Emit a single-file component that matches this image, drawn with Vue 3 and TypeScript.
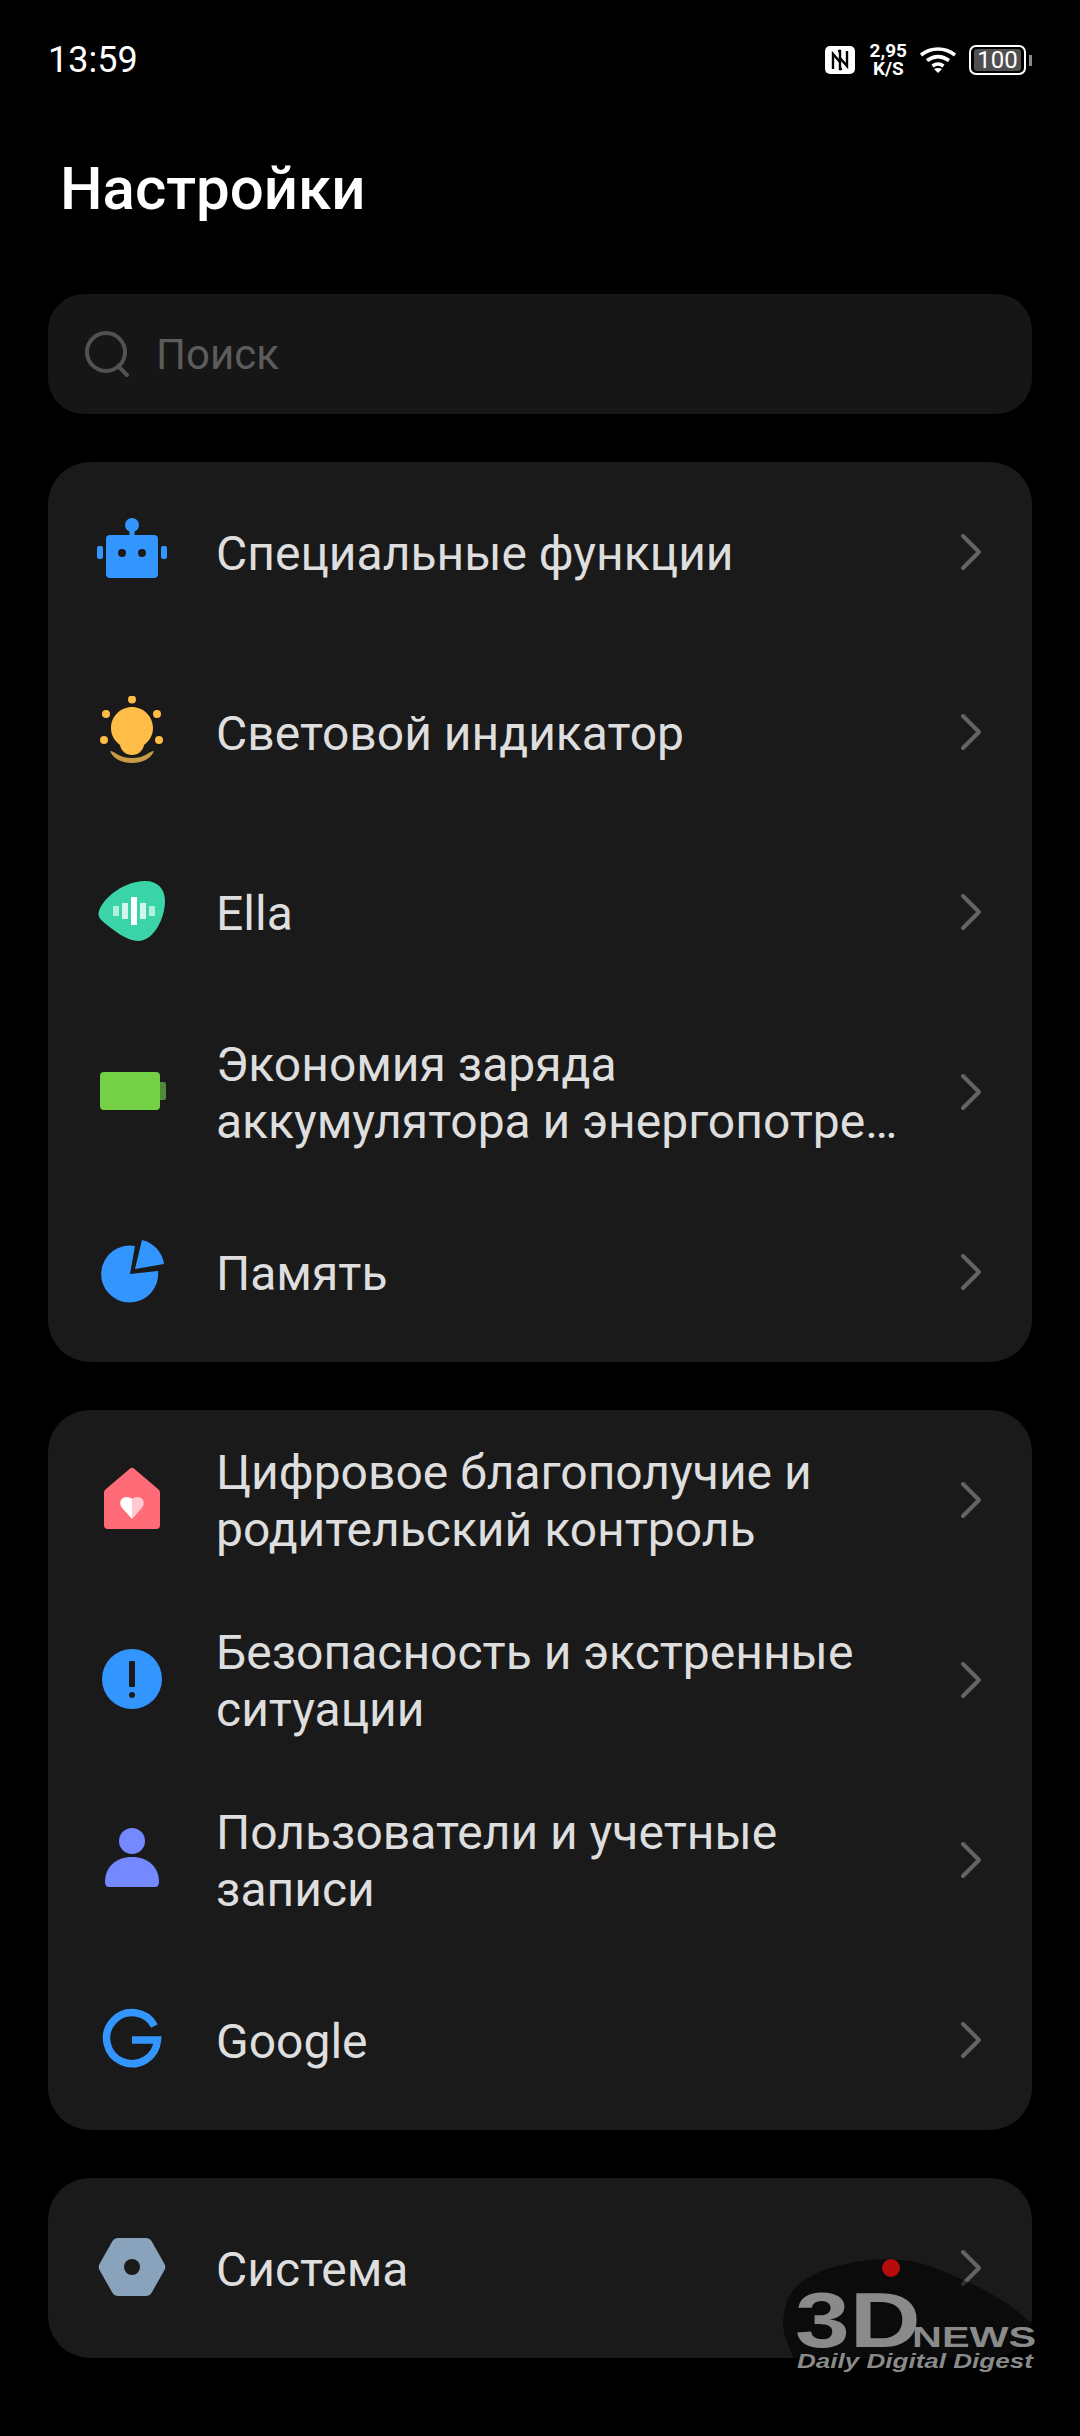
<script setup lang="ts">
interface Row { id: string; lines: string[] }
const groupOne: Row[] = [
  { id: 'robot', lines: ['Специальные функции'] },
  { id: 'bulb', lines: ['Световой индикатор'] },
  { id: 'ella', lines: ['Ella'] },
  { id: 'battery', lines: ['Экономия заряда', 'аккумулятора и энергопотре…'] },
  { id: 'pie', lines: ['Память'] },
]
const groupTwo: Row[] = [
  { id: 'home', lines: ['Цифровое благополучие и', 'родительский контроль'] },
  { id: 'alert', lines: ['Безопасность и экстренные', 'ситуации'] },
  { id: 'user', lines: ['Пользователи и учетные', 'записи'] },
  { id: 'google', lines: ['Google'] },
]
const groupThree: Row[] = [{ id: 'system', lines: ['Система'] }]
const groups = [groupOne, groupTwo, groupThree]
</script>

<template>
  <div class="page">
    <header class="status">
      <span class="time">13:59</span>
      <div class="status-icons">
        <svg class="nfc" width="30" height="28" viewBox="0 0 30 28">
          <rect width="30" height="28" rx="5" fill="#fff" />
          <path d="M8 23V8l7 8V5h-2M22 5v15l-7-8v11h2" fill="none" stroke="#000" stroke-width="2.4" />
        </svg>
        <div class="speed"><span>2,95</span><span>K/S</span></div>
        <svg class="wifi" width="36" height="26" viewBox="0 0 36 26">
          <path d="M1 8C11 0 25 0 35 8M7 13.500c7-5 15-5 22 0M12.500 19c3.500-2.500 7.500-2.500 11 0" fill="none" stroke="#fff" stroke-width="3.600" />
          <path d="M14 22c2.500-1.300 5.500-1.300 8 0l-4 4z" fill="#fff" />
        </svg>
        <div class="battery">
          <div class="battery-body"><span>100</span></div>
          <i class="battery-tip"></i>
        </div>
      </div>
    </header>

    <h1 class="title">Настройки</h1>

    <div class="search">
      <svg width="46" height="50" viewBox="0 0 46 50">
        <circle cx="22" cy="23" r="19" fill="none" stroke="#525252" stroke-width="4" />
        <path d="M34 37l9 9" stroke="#525252" stroke-width="4" stroke-linecap="round" />
      </svg>
      <span>Поиск</span>
    </div>

    <section v-for="(group, g) in groups" :key="g" class="card">
      <div v-for="row in group" :key="row.id" class="row">
        <div class="icon">
          <svg width="72" height="72" viewBox="0 0 72 72">
            <template v-if="row.id === 'robot'">
              <circle cx="36" cy="9" r="7" fill="#3396ff" />
              <rect x="33.500" y="12" width="5" height="10" fill="#3396ff" />
              <rect x="10" y="19" width="52" height="43" rx="4" fill="#3396ff" />
              <rect x="1" y="30" width="6" height="13" rx="2" fill="#3396ff" />
              <rect x="65" y="30" width="6" height="13" rx="2" fill="#3396ff" />
              <circle cx="26" cy="37" r="4" fill="#1a1a1a" />
              <circle cx="46" cy="37" r="4" fill="#1a1a1a" />
            </template>
            <template v-else-if="row.id === 'bulb'">
              <circle cx="36" cy="3.500" r="4" fill="#ffbc47" />
              <circle cx="10" cy="18" r="4" fill="#ffbc47" />
              <circle cx="61" cy="18" r="4" fill="#ffbc47" />
              <circle cx="8" cy="44" r="4" fill="#ffbc47" />
              <circle cx="63" cy="44" r="4" fill="#ffbc47" />
              <path d="M14 55c2 0 4 1 6 2.500 9 6 23 6 32 0 2-1.500 4-2.500 6-2.500-3 8-12 12-22 12s-19-4-22-12z" fill="#c79a45" />
              <path d="M36 11c11.500 0 21 9.500 21 21 0 8-4 13-9 17-1 6-6 10-12 10s-11-4-12-10c-5-4-9-9-9-17 0-11.500 9.500-21 21-21z" fill="#ffbc47" />
            </template>
            <template v-else-if="row.id === 'ella'">
              <path d="M3 35C8 20 30 5 49 5c13 0 20 8 20 20 0 17-11 40-27 40-10 0-22-9-31-16C5 44 1 41 3 35z" fill="#3bd4a8" />
              <rect x="17" y="30" width="6" height="10" fill="#b5f0dd" />
              <rect x="26" y="27" width="6" height="16" fill="#d2f6eb" />
              <rect x="35" y="21" width="6" height="28" fill="#fff" />
              <rect x="44" y="27" width="6" height="16" fill="#d2f6eb" />
              <rect x="53" y="30" width="6" height="10" fill="#b5f0dd" />
            </template>
            <template v-else-if="row.id === 'battery'">
              <rect x="60" y="26" width="10" height="18" rx="2" fill="#4f8a39" />
              <rect x="4" y="16" width="60" height="38" rx="4" fill="#74d146" />
            </template>
            <template v-else-if="row.id === 'pie'">
              <path d="M39 10 34 38 62 35A28.500 28.500 0 1 1 39 10z" fill="#3396ff" />
              <path d="M46 4 39 33 68 28A29 29 0 0 0 46 4z" fill="#3396ff" />
            </template>
            <template v-else-if="row.id === 'home'">
              <path d="M33.500 5a3.500 3.500 0 0 1 5 0L62 25c1.500 1.500 2 2 2 4V61a4 4 0 0 1-4 4H12a4 4 0 0 1-4-4V29c0-2 .5-2.500 2-4z" fill="#ff6b77" />
              <path d="M36 55 27 45c-5-5-3-12 4-12 2 0 4 1 5 2z" fill="#fff" />
              <path d="M36 55 45 45c5-5 3-12-4-12-2 0-4 1-5 2z" fill="#ffc9cf" />
            </template>
            <template v-else-if="row.id === 'alert'">
              <circle cx="36" cy="35" r="30" fill="#3396ff" />
              <rect x="33" y="17" width="6" height="26" rx="1" fill="#1a1a1a" />
              <circle cx="36" cy="51" r="3" fill="#1a1a1a" />
            </template>
            <template v-else-if="row.id === 'user'">
              <circle cx="36" cy="17" r="13" fill="#7488ff" />
              <path d="M9 58c0-15 11-25 27-25s27 10 27 25c0 3-1.500 5-4 5H13c-2.500 0-4-2-4-5z" fill="#7488ff" />
            </template>
            <template v-else-if="row.id === 'google'">
              <path d="M58.500 22A25.500 25.500 0 1 0 61.500 36H36" fill="none" stroke="#3396ff" stroke-width="7.500" />
            </template>
            <template v-else>
              <path d="M22 6h28c2.500 0 4 1 5.500 3l13 23c1 2 1 4 0 6l-13 23c-1.500 2-3 3-5.500 3H22c-2.500 0-4-1-5.500-3l-13-23c-1-2-1-4 0-6l13-23C18 7 19.500 6 22 6z" fill="#8aa3bd" />
              <circle cx="36" cy="35" r="8" fill="#1a1a1a" />
            </template>
          </svg>
        </div>
        <div class="label">
          <span v-for="line in row.lines" :key="line">{{ line }}</span>
        </div>
        <svg class="chevron" width="22" height="38" viewBox="0 0 22 38">
          <path d="M3 3l16 16L3 35" fill="none" stroke="#646464" stroke-width="4" stroke-linecap="round" stroke-linejoin="round" />
        </svg>
      </div>
    </section>

    <div class="watermark">
      <svg class="smear" width="260" height="104" viewBox="0 0 260 104">
        <path d="M4 58C6 36 20 22 50 12 90 0 130 0 160 14c30 12 66 28 92 54v36H14C8 86 0 76 4 58z" fill="#000" fill-opacity="0.55" />
      </svg>
      <i class="dot"></i>
      <b class="mark-3d">3D</b>
      <b class="mark-news">NEWS</b>
      <em class="mark-tag">Daily Digital Digest</em>
    </div>
  </div>
</template>

<style>
html, body { margin: 0; background: #000; }
</style>

<style scoped>
.page {
  position: relative;
  box-sizing: border-box;
  width: 1080px;
  height: 2436px;
  padding: 0 48px;
  overflow: hidden;
  background: #000;
  color: #dedede;
  font-family: Roboto, "Noto Sans", sans-serif;
}
.status {
  display: flex;
  align-items: center;
  justify-content: space-between;
  height: 60px;
  padding-top: 30px;
  color: #fff;
}
.time { font-size: 36px; }
.status-icons { display: flex; align-items: center; gap: 13px; }
.nfc { margin-right: 2px; margin-top: -1px; }
.speed {
  display: flex;
  flex-direction: column;
  align-items: center;
  font-size: 19px;
  font-weight: 700;
  line-height: 18px;
}
.battery { display: flex; align-items: center; gap: 3px; }
.battery-body {
  box-sizing: border-box;
  width: 57px;
  height: 30px;
  padding: 2px 3px;
  border: 2px solid #fff;
  border-radius: 7px;
}
.battery-body span {
  display: block;
  height: 100%;
  border-radius: 3px;
  background: #505050;
  font-size: 24px;
  line-height: 22px;
  text-align: center;
}
.battery-tip { width: 3px; height: 11px; background: #8a8a8a; }
.title {
  margin: 64px 0 0 12px;
  color: #fff;
  font-size: 60px;
  font-weight: 500;
  line-height: 70px;
}
.search {
  display: flex;
  align-items: center;
  gap: 26px;
  height: 120px;
  margin-top: 70px;
  padding-left: 36px;
  border-radius: 36px;
  background: #161616;
  color: #5c5c5c;
  font-size: 42px;
}
.card {
  margin-top: 48px;
  border-radius: 42px;
  background: #1a1a1a;
}
.row {
  display: flex;
  align-items: center;
  height: 180px;
  padding: 0 50px 0 48px;
}
.icon { display: flex; flex: none; width: 72px; height: 72px; }
.label {
  display: flex;
  flex: 1;
  flex-direction: column;
  margin-left: 48px;
  font-size: 48px;
  line-height: 57px;
  white-space: nowrap;
  transform: translateY(1px);
}
.chevron { flex: none; }
.watermark {
  position: absolute;
  left: 780px;
  top: 2256px;
  width: 260px;
  height: 120px;
  color: #8a8a8a;
  font-family: "Liberation Sans", sans-serif;
}
.smear { position: absolute; left: 0; top: 0; }
.dot {
  position: absolute;
  left: 102px;
  top: 3px;
  width: 18px;
  height: 18px;
  border-radius: 50%;
  background: #b50d0d;
}
.mark-3d, .mark-news, .mark-tag {
  position: absolute;
  transform-origin: left top;
  white-space: nowrap;
}
.mark-3d {
  left: 15px;
  top: 25px;
  font-size: 78px;
  line-height: 78px;
  transform: scaleX(1.26);
}
.mark-news {
  left: 132px;
  top: 66px;
  font-size: 30px;
  line-height: 30px;
  transform: scaleX(1.38);
}
.mark-tag {
  left: 17px;
  top: 93px;
  font-size: 21px;
  font-weight: 700;
  line-height: 24px;
  transform: scaleX(1.24);
}
</style>
